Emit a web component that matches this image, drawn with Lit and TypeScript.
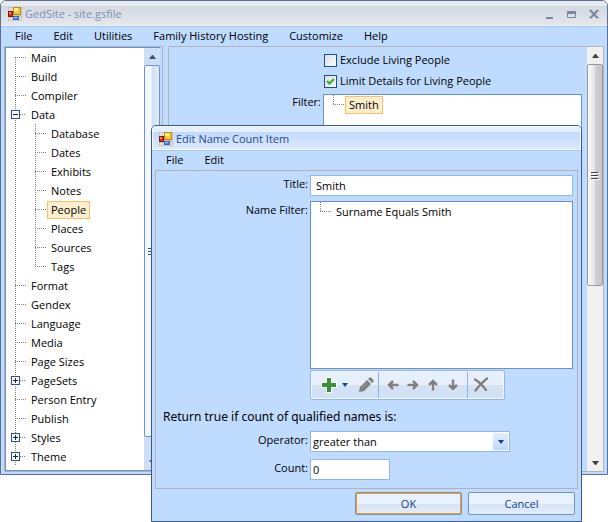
import { LitElement, html, css, svg, nothing } from "lit";
import { customElement, property } from "lit/decorators.js";

interface TreeNode {
  label: string;
  expandable?: boolean;
  selected?: boolean;
  children?: TreeNode[];
}

const pages: TreeNode[] = [
  { label: "Main" },
  { label: "Build" },
  { label: "Compiler" },
  {
    label: "Data",
    expandable: true,
    children: [
      { label: "Database" },
      { label: "Dates" },
      { label: "Exhibits" },
      { label: "Notes" },
      { label: "People", selected: true },
      { label: "Places" },
      { label: "Sources" },
      { label: "Tags" },
    ],
  },
  { label: "Format" },
  { label: "Gendex" },
  { label: "Language" },
  { label: "Media" },
  { label: "Page Sizes" },
  { label: "PageSets", expandable: true },
  { label: "Person Entry" },
  { label: "Publish" },
  { label: "Styles", expandable: true },
  { label: "Theme", expandable: true },
];

const shared = css`
  * {
    box-sizing: border-box;
  }
  button,
  input,
  select {
    font: inherit;
    color: inherit;
    margin: 0;
    border-radius: 0;
  }
  button {
    padding: 0;
    border: 0;
    background: none;
  }
  svg {
    display: block;
  }
`;

const appIcon = svg`<svg width="14" height="14" viewBox="0 0 14 14" aria-hidden="true">
  <rect width="14" height="14" fill="#c9c6c4"/>
  <rect x="1" y="1" width="4" height="3" fill="#e2dedc"/>
  <rect x="1" y="11" width="4" height="2" fill="#e2dedc"/>
  <rect x="11" y="10" width="2" height="3" fill="#e2dedc"/>
  <rect x="0.5" y="4.5" width="4" height="5" fill="#c8321e" stroke="#8c1408"/>
  <rect x="1" y="5" width="2" height="2" fill="#ee8a78"/>
  <rect x="5.5" y="0.5" width="7" height="7" fill="#fbc82c" stroke="#c08a10"/>
  <rect x="6" y="1" width="4" height="3" fill="#fff0a0"/>
  <rect x="5.5" y="9.5" width="5" height="3" fill="#4c8ae8" stroke="#3468c8"/>
  <rect x="6" y="10" width="3" height="1" fill="#a8ccff"/>
</svg>`;

@customElement("menu-strip")
class MenuStrip extends LitElement {
  @property({ attribute: false }) items: string[] = [];
  static styles = [
    shared,
    css`
      nav {
        display: flex;
        gap: 21px;
        height: 20px;
        padding: 0 14px;
        align-items: center;
      }
      :host([compact]) nav {
        padding: 0 11px;
      }
    `,
  ];
  render() {
    return html`<nav>${this.items.map((i) => html`<button>${i}</button>`)}</nav>`;
  }
}

@customElement("tree-view")
class TreeView extends LitElement {
  @property({ attribute: false }) nodes: TreeNode[] = [];
  static styles = [
    shared,
    css`
      :host {
        display: block;
      }
      ul {
        list-style: none;
        margin: 0;
        padding: 0;
      }
      .root {
        height: 100%;
        padding-left: 9px;
        background: repeating-linear-gradient(#808080 0 1px, transparent 1px 2px) 9px 10px / 1px
          100% no-repeat;
      }
      :host([single]) .root {
        height: auto;
        background-position: 9px 0;
        background-size: 1px 9px;
      }
      .branch {
        margin-left: 20px;
        background: repeating-linear-gradient(#808080 0 1px, transparent 1px 2px) 0 0 / 1px
          calc(100% - 9px) no-repeat;
      }
      .row {
        display: flex;
        align-items: center;
        height: 19px;
      }
      .stem {
        width: 11px;
        height: 1px;
        background: repeating-linear-gradient(90deg, #808080 0 1px, transparent 1px 2px);
      }
      .toggle {
        width: 9px;
        height: 9px;
        margin-left: -4px;
      }
      .toggle + .stem {
        width: 6px;
      }
      .name {
        height: 18px;
        margin-left: 1px;
        padding: 0 3px;
        border: 1px solid transparent;
        line-height: 16px;
      }
      .selected {
        background: #ffefcf;
        border-color: #ffbd69;
      }
    `,
  ];
  private row(n: TreeNode): unknown {
    const open = !!n.children;
    return html`<li>
      <div class="row">
        ${n.expandable
          ? html`<button class="toggle" aria-label=${(open ? "Collapse " : "Expand ") + n.label}>
              <svg width="9" height="9" viewBox="0 0 9 9">
                <rect x="0.5" y="0.5" width="8" height="8" fill="#f4f8ff" stroke="#34527c" />
                <path d="M2 4.5H7" stroke="#102a58" />
                ${open ? nothing : svg`<path d="M4.5 2V7" stroke="#102a58"/>`}
              </svg>
            </button>`
          : nothing}
        <span class="stem"></span>
        <button class="name ${n.selected ? "selected" : ""}">${n.label}</button>
      </div>
      ${n.children ? html`<ul class="branch">${n.children.map((c) => this.row(c))}</ul>` : nothing}
    </li>`;
  }
  render() {
    return html`<ul class="root">${this.nodes.map((n) => this.row(n))}</ul>`;
  }
}

@customElement("scroll-bar")
class ScrollBar extends LitElement {
  static styles = [
    shared,
    css`
      :host {
        display: flex;
        flex-direction: column;
        width: 16px;
        flex: none;
        background: #f0f0f0;
        color: #404040;
      }
      :host([tone="blue"]) {
        background: #cfdff3;
        color: #34527c;
      }
      button {
        display: grid;
        place-items: center;
        height: 17px;
        width: 16px;
        flex: none;
      }
      .thumb {
        display: grid;
        place-items: center;
        border: 1px solid #9a9a9a;
        border-radius: 2px;
        background: linear-gradient(90deg, #fafafa, #e6e6e8 45%, #cfcfd2 55%, #c6c6ca);
        flex: var(--thumb, 1);
      }
      :host([tone="blue"]) .thumb {
        border-color: #6f94cc;
        background: linear-gradient(90deg, #f2f7ff 0 45%, #d0dff4 50%, #e0ebfa);
      }
      .rest {
        flex: var(--rest, 1);
      }
    `,
  ];
  render() {
    return html`<button aria-label="Scroll up">
        <svg width="7" height="4" viewBox="0 0 7 4"><path d="M3 0h1l3 4H0z" fill="currentColor" /></svg>
      </button>
      <div class="thumb">
        <svg width="8" height="9" viewBox="0 0 8 9">
          <path d="M0 1.5H7M0 4.5H7M0 7.5H7" stroke="currentColor" />
          <path d="M1 2.5H8M1 5.5H8M1 8.5H8" stroke="#fff" />
        </svg>
      </div>
      <div class="rest"></div>
      <button aria-label="Scroll down">
        <svg width="7" height="4" viewBox="0 0 7 4"><path d="M0 0h7L4 4H3z" fill="currentColor" /></svg>
      </button>`;
  }
}

@customElement("name-count-dialog")
class NameCountDialog extends LitElement {
  static styles = [
    shared,
    css`
      :host {
        display: block;
        background: #bfdbff;
        border: 1px solid #3b5a8a;
        border-radius: 5px 5px 0 0;
        padding: 0 3px 6px;
      }
      header {
        display: flex;
        align-items: center;
        gap: 3px;
        height: 24px;
        margin: 0 -3px;
        padding: 2px 6px 0;
        border: 1px solid #f4f8ff;
        border-bottom-color: #fff;
        border-radius: 4px 4px 0 0;
        background: linear-gradient(#e4efff 0 5px, #c2d9fc 5px, #dbe9ff);
        box-shadow: 0 1px #a3c5f5;
        color: #1f4a94;
      }
      .frame {
        border: 1px solid #b0b4ba;
        padding: 4px 4px 8px 3px;
      }
      .form {
        display: grid;
        grid-template-columns: 149px 1fr;
        column-gap: 2px;
        row-gap: 5px;
      }
      .form label,
      .caption {
        text-align: right;
        line-height: 18px;
      }
      .field {
        height: 21px;
        border: 1px solid #93b7e8;
        background: #fff;
        color: #000;
        padding: 0 5px;
        width: 100%;
        outline: none;
      }
      .list {
        height: 168px;
        border: 1px solid #6593cf;
        background: #fff;
        overflow: hidden;
      }
      .tools {
        grid-column: 2;
        display: flex;
        align-items: center;
        width: 195px;
        height: 30px;
        margin-top: -4px;
        border: 1px solid #93b7e8;
        border-radius: 2px;
        background: linear-gradient(#e6effa 0 50%, #d3e1f4 50%);
        box-shadow: inset 0 0 0 1px #f0f6ff;
      }
      .group {
        display: flex;
        align-items: center;
        height: 26px;
      }
      .group + .group {
        border-left: 1px solid #8db2e3;
      }
      .group button {
        display: grid;
        place-items: center;
        width: 20px;
        height: 24px;
      }
      .group .add {
        width: 36px;
        margin-left: 6px;
      }
      .group .edit {
        width: 25px;
      }
      .moves {
        padding: 0 4px;
      }
      h2 {
        margin: 6px 0 3px;
        padding-left: 4px;
        font: 400 12px/22px "Noto Sans", "Open Sans", sans-serif;
      }
      .criteria {
        row-gap: 7px;
      }
      .choice {
        display: grid;
        width: 200px;
      }
      .choice > * {
        grid-area: 1 / 1;
      }
      select.field {
        appearance: none;
        padding: 0 2px;
      }
      .drop {
        display: grid;
        place-items: center;
        justify-self: end;
        align-self: center;
        width: 15px;
        height: 17px;
        margin-right: 2px;
        background: linear-gradient(#e2eeff, #bdd8fd);
        pointer-events: none;
      }
      .count {
        width: 80px;
        padding: 0 2px;
      }
      footer {
        display: flex;
        justify-content: flex-end;
        gap: 6px;
        padding: 3px 3px 0;
      }
      footer button {
        width: 107px;
        height: 23px;
        border: 1px solid #6f92c4;
        border-radius: 2px;
        background: linear-gradient(#e9f1fc 0 50%, #d5e3f4 50%, #e2eefc);
        color: #15428b;
      }
      footer .primary {
        box-shadow: inset 0 0 0 1px #ff9a10;
      }
    `,
  ];
  render() {
    return html`
      <header>${appIcon}<span>Edit Name Count Item</span></header>
      <menu-strip compact .items=${["File", "Edit"]}></menu-strip>
      <div class="frame">
        <div class="form">
          <label for="title">Title:</label>
          <input id="title" class="field" value="Smith" />
          <span class="caption">Name Filter:</span>
          <div class="list">
            <tree-view single .nodes=${[{ label: "Surname Equals Smith" }]}></tree-view>
          </div>
          <div class="tools">
            <div class="group">
              <button class="add" aria-label="Add">
                <svg width="28" height="16" viewBox="0 0 28 16">
                  <path d="M5 0h6v5h5v6h-5v5H5v-5H0V5h5z" fill="#fff" opacity=".8" />
                  <path d="M6 1h4v5h5v4h-5v5H6v-5H1V6h5z" fill="#389038" />
                  <path d="M21 6h6l-3 4z" fill="#0c4aa0" />
                </svg>
              </button>
              <button class="edit" aria-label="Edit">
                <svg width="16" height="16" viewBox="0 0 16 16">
                  <path d="M1 15l1-5 7-7 4 4-7 7z M10 2l1.500-1.500h1.500L15.500 3v1.500L14 6z" fill="#808080" />
                  <path d="M4 11l5-5" stroke="#a8a8a8" />
                </svg>
              </button>
            </div>
            <div class="group moves">
              ${[
                ["left", 0],
                ["right", 180],
                ["up", 90],
                ["down", 270],
              ].map(
                ([name, angle]) => html`<button aria-label="Move ${name}">
                  <svg width="14" height="14" viewBox="0 0 14 14">
                    <g transform="rotate(${angle} 7 7)" fill="none">
                      <path d="M12.500 7H3M7 3L3 7L7 11" stroke="#f4f4f4" stroke-width="4.500" opacity=".6" />
                      <path d="M12.500 7H3M7 3L3 7L7 11" stroke="#808080" stroke-width="2.500" />
                    </g>
                  </svg>
                </button>`
              )}
            </div>
            <div class="group">
              <button class="edit" aria-label="Delete">
                <svg width="16" height="16" viewBox="0 0 16 16" fill="none" stroke-linecap="round">
                  <path d="M2 2.500Q8 6 13 13M14 1.500Q8 6 2.500 13.500" stroke="#f4f4f4" stroke-width="4" opacity=".6" />
                  <path d="M2 2.500Q8 6 13 13M14 1.500Q8 6 2.500 13.500" stroke="#808080" stroke-width="2.400" />
                </svg>
              </button>
            </div>
          </div>
        </div>
        <h2>Return true if count of qualified names is:</h2>
        <div class="form criteria">
          <label for="operator">Operator:</label>
          <div class="choice">
            <select id="operator" class="field">
              <option>greater than</option>
            </select>
            <span class="drop">
              <svg width="6" height="4" viewBox="0 0 6 4"><path d="M0 0h6L3 4z" fill="#15428b" /></svg>
            </span>
          </div>
          <label for="count">Count:</label>
          <input id="count" class="field count" value="0" />
        </div>
      </div>
      <footer>
        <button class="primary">OK</button>
        <button>Cancel</button>
      </footer>
    `;
  }
}

@customElement("app-root")
class AppRoot extends LitElement {
  static styles = [
    shared,
    css`
      :host {
        display: block;
        position: relative;
        min-height: 100vh;
        background: #fff;
        font: 11px/16px "Open Sans", "Noto Sans", sans-serif;
        color: #000;
      }
      .window {
        background: #bfdbff;
        border: 1px solid #5c6f96;
        border-radius: 6px 6px 0 0;
      }
      .bar {
        display: flex;
        align-items: center;
        height: 25px;
        padding: 2px 8px 0 7px;
        border-bottom: 1px solid #f4f6f8;
        border-radius: 5px 5px 0 0;
        background: linear-gradient(#e6eaef 0 5px, #d3d9e1 5px, #e4e7ec);
        box-shadow: 0 1px #a3c5f5;
        color: #7b8fb2;
      }
      .bar .title {
        flex: 1;
        margin-left: 3px;
      }
      .controls {
        display: flex;
        gap: 12px;
      }
      .panes {
        display: flex;
        gap: 5px;
        padding: 0 3px 2px;
      }
      .side {
        display: flex;
        flex: none;
        width: 159px;
        border: 1px solid #b0b4ba;
      }
      .inner {
        display: flex;
        flex: 1;
        border: 1px solid #6593cf;
        border-right: 0;
        background: #fff;
      }
      .inner tree-view {
        flex: 1;
        padding-bottom: 4px;
      }
      .inner scroll-bar {
        --thumb: 372;
        --rest: 16;
      }
      .gutter {
        width: 2px;
        background: #bfdbff;
      }
      .main {
        display: flex;
        flex: 1;
        border: 1px solid #b0b4ba;
      }
      .main scroll-bar {
        --thumb: 221;
        --rest: 168;
      }
      .settings {
        flex: 1;
        display: grid;
        grid-template-columns: 152px 1fr;
        grid-auto-rows: min-content;
        gap: 5px 2px;
        padding: 5px 5px 0 0;
      }
      .check {
        grid-column: 2;
        display: flex;
        align-items: center;
        gap: 3px;
        padding-left: 1px;
      }
      .box {
        display: grid;
        place-items: center;
      }
      .box > * {
        grid-area: 1 / 1;
      }
      .box svg {
        pointer-events: none;
      }
      input[type="checkbox"] {
        appearance: none;
        width: 13px;
        height: 13px;
        border: 1px solid #1c5180;
        background: linear-gradient(135deg, #dcdfe6, #fbfbfc);
      }
      .caption {
        text-align: right;
      }
      .filter {
        height: 200px;
        border: 1px solid #6593cf;
        background: #fff;
      }
      name-count-dialog {
        position: absolute;
        top: 125px;
        left: 151px;
        right: 26px;
      }
    `,
  ];
  private check(label: string, on: boolean) {
    return html`<label class="check">
      <span class="box">
        <input type="checkbox" ?checked=${on} />
        ${on
          ? html`<svg width="9" height="9" viewBox="0 0 9 9">
              <path d="M1 4L3.500 6.500L8 2" fill="none" stroke="#45a845" stroke-width="2.400" />
            </svg>`
          : nothing}
      </span>
      ${label}
    </label>`;
  }
  render() {
    return html`
      <div class="window">
        <header class="bar">
          ${appIcon}
          <span class="title">GedSite - site.gsfile</span>
          <div class="controls">
            <button aria-label="Minimize">
              <svg width="11" height="10" viewBox="0 0 11 10"><path d="M3 8h7v2H3z" fill="#7888a4" /></svg>
            </button>
            <button aria-label="Maximize">
              <svg width="11" height="10" viewBox="0 0 11 10">
                <path d="M1.500 2.500h8v6h-8z" fill="none" stroke="#7888a4" />
                <path d="M1 2h9v3H1z" fill="#7888a4" />
              </svg>
            </button>
            <button aria-label="Close">
              <svg width="10" height="10" viewBox="0 0 10 10">
                <path d="M1.500 1.500L8.500 9M8.500 1.500L1.500 9" stroke="#7888a4" stroke-width="2" />
                <path d="M0 1.500h3M7 1.500h3M0 8.500h3M7 8.500h3" stroke="#7888a4" />
              </svg>
            </button>
          </div>
        </header>
        <menu-strip
          .items=${["File", "Edit", "Utilities", "Family History Hosting", "Customize", "Help"]}
        ></menu-strip>
        <div class="panes">
          <div class="side">
            <div class="inner">
              <tree-view .nodes=${pages}></tree-view>
              <scroll-bar tone="blue"></scroll-bar>
            </div>
            <div class="gutter"></div>
          </div>
          <main class="main">
            <div class="settings">
              ${this.check("Exclude Living People", false)}
              ${this.check("Limit Details for Living People", true)}
              <span class="caption">Filter:</span>
              <div class="filter">
                <tree-view single .nodes=${[{ label: "Smith", selected: true }]}></tree-view>
              </div>
            </div>
            <scroll-bar></scroll-bar>
          </main>
        </div>
      </div>
      <name-count-dialog></name-count-dialog>
    `;
  }
}
